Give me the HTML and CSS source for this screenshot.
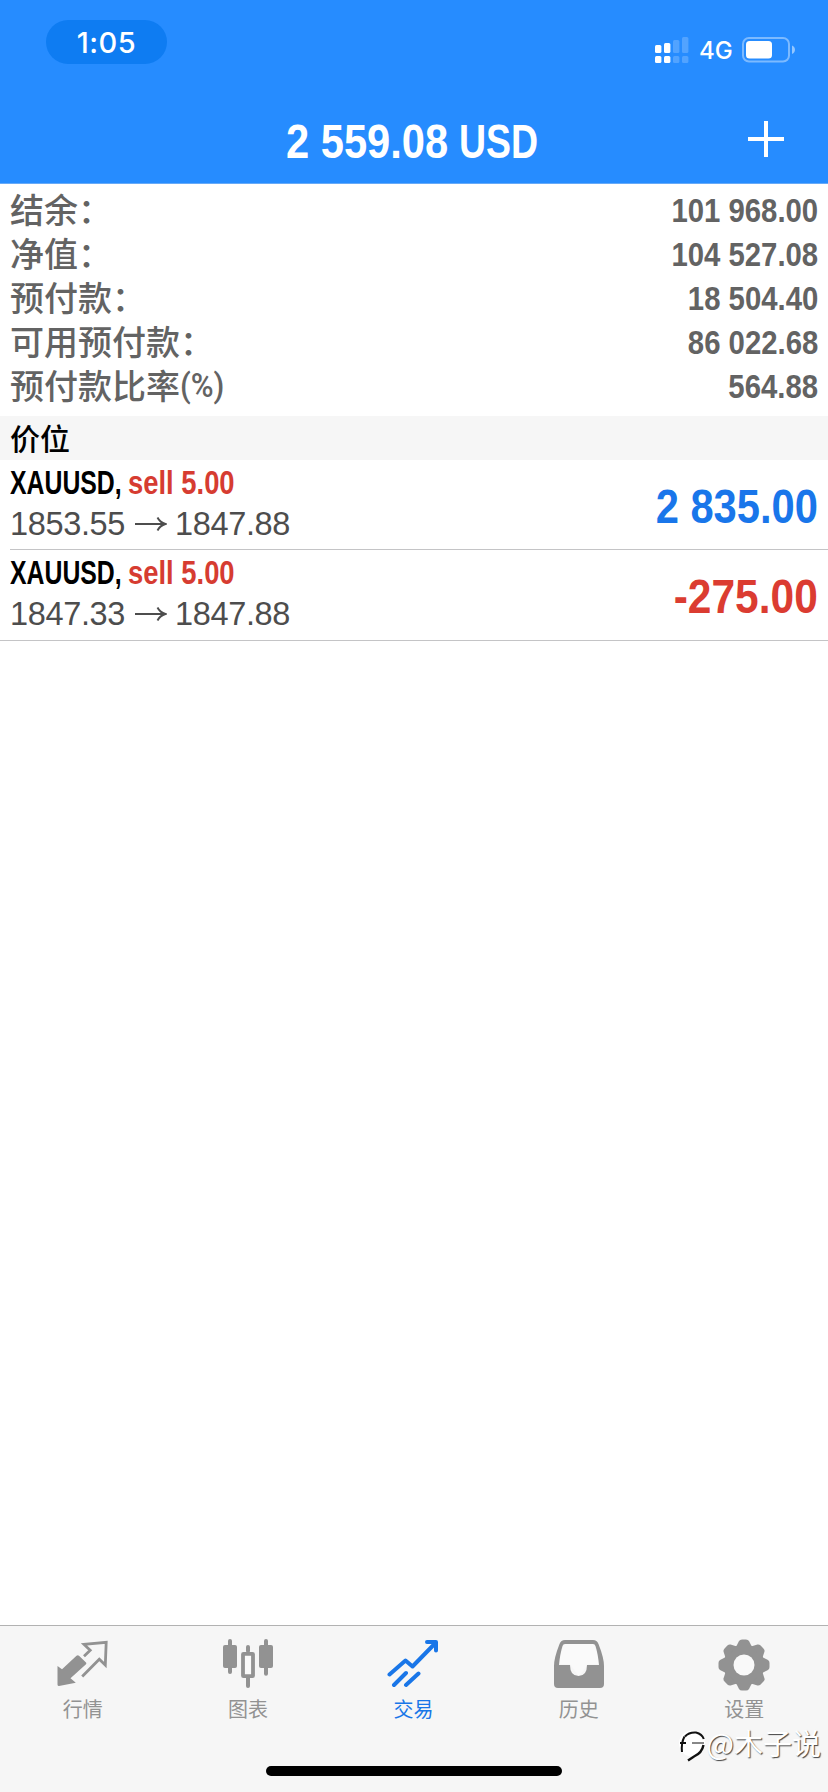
FILE: index.html
```html
<!DOCTYPE html>
<html lang="zh-CN">
<head>
<meta charset="utf-8">
<title>交易</title>
<link rel="stylesheet" href="styles.css">
</head>
<body>
<div class="app">
  <header class="header">
    <div class="status">
      <div class="time">1:05</div>
      <div class="indicators">
        <svg class="signal" width="34" height="28" viewBox="0 0 34 28" fill="#fff">
          <rect x="0" y="8" width="6.4" height="8" rx="1.5"/><rect x="9" y="6" width="6.4" height="10" rx="1.5"/>
          <rect x="0" y="19" width="6.4" height="7" rx="1.5"/><rect x="9" y="19" width="6.4" height="7" rx="1.5"/>
          <g opacity=".2"><rect x="18" y="3" width="6.4" height="13" rx="1.5"/><rect x="27" y="0" width="6.4" height="16" rx="1.5"/><rect x="18" y="19" width="6.4" height="7" rx="1.5"/><rect x="27" y="19" width="6.4" height="7" rx="1.5"/></g>
        </svg>
        <span class="network">4G</span>
        <svg class="battery" width="54" height="26" viewBox="0 0 54 26">
          <rect x="1" y="1" width="46" height="23.5" rx="6" fill="none" stroke="#fff" stroke-opacity=".4" stroke-width="2"/>
          <rect x="4" y="4" width="26" height="17.5" rx="3.5" fill="#fff"/>
          <path d="M50 8.5c4 1.5 4 7 0 8.5z" fill="#fff" opacity=".5"/>
        </svg>
      </div>
    </div>
    <div class="titlebar">
      <h1 class="title"><span class="amount">2 559.08</span><span class="currency">USD</span></h1>
      <svg class="plus" width="36" height="36" viewBox="0 0 36 36"><path d="M18 0v36M0 18h36" stroke="#fff" stroke-width="4"/></svg>
    </div>
  </header>

  <section class="summary">
    <div class="line"><span>结余：</span><b class="num">101 968.00</b></div>
    <div class="line"><span>净值：</span><b class="num">104 527.08</b></div>
    <div class="line"><span>预付款：</span><b class="num">18 504.40</b></div>
    <div class="line"><span>可用预付款：</span><b class="num">86 022.68</b></div>
    <div class="line"><span>预付款比率<i class="percent">(%)</i></span><b class="num">564.88</b></div>
  </section>

  <h2 class="section">价位</h2>

  <div class="position">
    <div class="info">
      <div class="order"><span class="symbol">XAUUSD,</span><span class="side">sell 5.00</span></div>
      <div class="prices"><span>1853.55</span><svg class="arrow" width="32" height="16" viewBox="0 0 32 16"><path d="M0 8h30M22.5 1.5Q25 6.500 30.5 8Q25 9.5 22.5 14.5" fill="none" stroke="#4d4d4d" stroke-width="1.9"/></svg><span>1847.88</span></div>
    </div>
    <b class="profit up">2 835.00</b>
  </div>
  <div class="position last">
    <div class="info">
      <div class="order"><span class="symbol">XAUUSD,</span><span class="side">sell 5.00</span></div>
      <div class="prices"><span>1847.33</span><svg class="arrow" width="32" height="16" viewBox="0 0 32 16"><path d="M0 8h30M22.5 1.5Q25 6.500 30.5 8Q25 9.5 22.5 14.5" fill="none" stroke="#4d4d4d" stroke-width="1.9"/></svg><span>1847.88</span></div>
    </div>
    <b class="profit down">-275.00</b>
  </div>

  <main class="blank"></main>

  <footer class="footer">
    <nav class="tabs">
      <div class="tab">
        <svg width="52" height="52" viewBox="0 0 52 52"><path d="M.5 27L5 30.300 19.500 16.800Q20.800 15.500 22 16.800L29 23.500Q29.800 24.300 29 25.200L13.500 39.300 18.800 43.700 2 47Q.5 47 .5 45.500z" fill="#929292"/><path d="M27 17.200L33.200 11.300 27 5.400 49.200 3.300 48.300 26 42.300 20.300 25.200 37.500" fill="none" stroke="#929292" stroke-width="2.800"/></svg>
        <span>行情</span>
      </div>
      <div class="tab">
        <svg width="52" height="52" viewBox="0 0 52 52" fill="#929292"><rect x="1" y="6" width="14" height="23" rx="2"/><rect x="6" y="0" width="4" height="35" rx="2"/><rect x="37" y="6" width="14" height="23" rx="2"/><rect x="42" y="0" width="4" height="36.700" rx="2"/><rect x="24" y="6" width="4" height="8" rx="2"/><rect x="24" y="37" width="4" height="12" rx="2"/><rect x="21" y="14.800" width="10" height="22.400" rx=".5" fill="#fafafa" stroke="#929292" stroke-width="3.800" stroke-linejoin="round"/></svg>
        <span>图表</span>
      </div>
      <div class="tab active">
        <svg width="52" height="52" viewBox="0 0 52 52" fill="none" stroke="#1976e8" stroke-width="4" stroke-linecap="round" stroke-linejoin="round"><path d="M2.500 35.500L18.500 21.500l7 6L46.500 6M7 46l12-12M19 46l12.500-11.500M40 3h9v8.500"/></svg>
        <span>交易</span>
      </div>
      <div class="tab">
        <svg width="52" height="52" viewBox="0 0 52 52"><path d="M12 3h28l8 22H35L26 38 17 25H4z" fill="#fafafa"/><path fill="#929292" fill-rule="evenodd" d="M12 1h28q4 0 5.500 4Q51 19 51 27v18q0 4-4 4H5q-4 0-4-4V27Q1 19 6.500 5 8 1 12 1zM12 5q-2 0-2.500 2Q7 15 6 26h11q0 11 8.500 11T34 26h12Q45 15 42.500 7 42 5 40 5z"/></svg>
        <span>历史</span>
      </div>
      <div class="tab">
        <svg width="52" height="52" viewBox="-26 -26 52 52"><g fill="#929292"><circle r="20.500"/><g id="pair"><path id="tooth" d="M-8-18L-5-24Q-4-25.500-2-25.500H2Q4-25.500 5-24L8-18z"/><use href="#tooth" transform="rotate(180)"/></g><use href="#pair" transform="rotate(45)"/><use href="#pair" transform="rotate(90)"/><use href="#pair" transform="rotate(135)"/></g><circle r="10.500" fill="#f9f9f9"/></svg>
        <span>设置</span>
      </div>
    </nav>
    <div class="home"></div>
    <div class="watermark">
      <svg width="30" height="38" viewBox="0 0 30 38" fill="none" stroke="#111"><circle cx="15" cy="18.500" r="13" fill="#fff" stroke="none"/><path d="M8 11.500Q12 7 19 7.500 25 9 26.800 14M7.500 11.500Q4 18 5 27M3 18h6" stroke-width="2"/><path d="M15 18h12" stroke-width="1"/><path d="M26.500 20Q25 28 17 31.500L11 35.500" stroke-width="2.400"/></svg>
      <span>@木子说</span>
    </div>
  </footer>
</div>
</body>
</html>
```
FILE: styles.css
```css
* { box-sizing: border-box; }
body { margin: 0; background: #fff; font-family: "Liberation Sans", "Noto Sans CJK SC", sans-serif; }
.app { width: 828px; height: 1792px; display: flex; flex-direction: column; overflow: hidden; }

.header { height: 184px; background: #268cff; border-bottom: 1px solid #67aaf8; color: #fff; flex: none; }
.status { height: 96px; display: flex; justify-content: space-between; align-items: flex-start; padding: 20px 32px 0 46px; }
.time { width: 121px; height: 44px; border-radius: 22px; background: #0e7cf2; text-align: center; font: 500 29px/45px Inter, sans-serif; letter-spacing: .5px; }
.indicators { display: flex; padding-top: 17px; }
.signal { margin-right: 10px; }
.network { width: 43px; font: 500 24px/28px Inter, sans-serif; }
.titlebar { height: 87px; display: grid; grid-template-columns: 100px 1fr 100px; align-items: center; }
.title { grid-column: 2; margin: 0; padding-left: 186px; display: flex; font-size: 48px; line-height: 91px; white-space: nowrap; }
.title span { transform-origin: left; }
.amount { width: 173px; transform: scaleX(.868); }
.currency { transform: scaleX(.78); }
.plus { margin: 0 0 5px 20px; }

.summary { height: 232px; padding: 3px 10px 9px; color: #636363; flex: none; }
.line { height: 44px; display: flex; justify-content: space-between; font: 500 34px/44px "Noto Sans CJK SC", sans-serif; }
.num { padding-top: 1px; font: 700 34px/44px "Liberation Sans", sans-serif; transform: scaleX(.862); transform-origin: right; white-space: pre; }
.percent { display: inline-block; font: 500 33px/40px Roboto, sans-serif; transform: translateY(-2px) scaleX(.94); transform-origin: left; }
.section { margin: 0; height: 44px; padding-left: 10px; background: #f6f6f6; color: #000; font: 500 30px/42px "Noto Sans CJK SC", sans-serif; flex: none; }

.position { height: 90px; margin-left: 10px; padding-right: 10px; display: flex; justify-content: space-between; border-bottom: 1px solid #c4c4c6; flex: none; }
.position.last { height: 91px; margin-left: 0; padding-left: 10px; }
.order { display: flex; height: 45px; padding-top: 3px; font-weight: 700; font-size: 33px; line-height: 40px; white-space: nowrap; }
.order span { transform-origin: left; }
.symbol { width: 118px; transform: scaleX(.752); color: #000; }
.side { color: #d63c31; transform: scaleX(.83); }
.prices { display: flex; align-items: center; font-size: 32.5px; letter-spacing: -.35px; line-height: 38px; height: 38px; color: #4d4d4d; }
.arrow { margin: 0 8px 0 10px; }
.profit { font-size: 48px; line-height: 94px; transform: scaleX(.868); transform-origin: right; white-space: nowrap; }
.up { color: #1976ea; }
.down { color: #db3c31; transform: scaleX(.885); }

.blank { flex: 1; }
.footer { position: relative; height: 167px; flex: none; border-top: 1px solid #b2b2b2; background: #f6f6f6; }
.tabs { display: grid; grid-template-columns: repeat(5, 165.4px); padding-top: 13px; }
.tab { display: flex; flex-direction: column; align-items: center; color: #929292; font: 400 20px/30px "Noto Sans CJK SC", sans-serif; }
.tab svg { display: block; margin-bottom: 3px; }
.active { color: #1976e8; }
.home { width: 296px; height: 10px; border-radius: 5px; background: #000; margin: 42px auto 0; }
.watermark { position: absolute; right: 7px; bottom: 29px; display: flex; align-items: center; color: #fff; font: 400 29px/38px "Noto Sans CJK SC", sans-serif; text-shadow: 1px 1px 1px #444; }
.watermark span { margin-top: -5px; }
```
